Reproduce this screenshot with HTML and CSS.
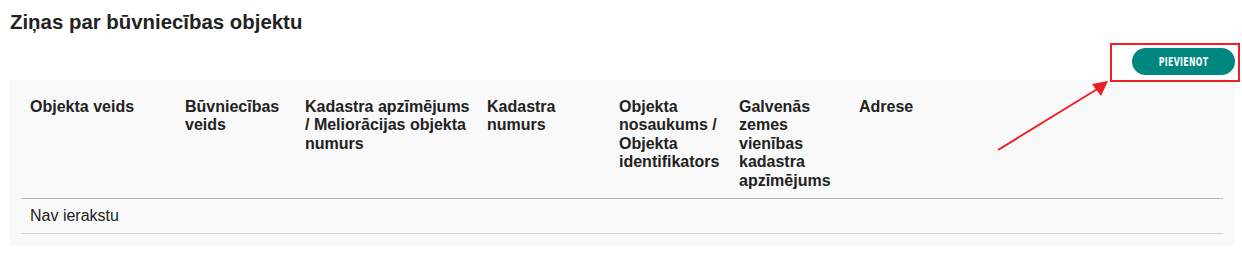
FILE: index.html
```html
<!DOCTYPE html>
<html lang="lv">

<head>
    <meta charset="UTF-8">
    <meta name="viewport" content="width=device-width, initial-scale=1.0">
    <title>Ziņas par būvniecības objektu</title>
    <link rel="stylesheet" href="styles.css">
</head>

<body>
    <div class="page">
        <h2 class="section-title">Ziņas par būvniecības objektu</h2>

        <div class="toolbar">
            <button class="btn-add" type="button"><span>Pievienot</span></button>
        </div>

        <div class="table-panel">
            <table class="objects-table">
                <thead>
                    <tr>
                        <th class="col-type">Objekta veids</th>
                        <th class="col-build">Būvniecības veids</th>
                        <th class="col-cadastre">Kadastra apzīmējums / Meliorācijas objekta numurs</th>
                        <th class="col-number">Kadastra numurs</th>
                        <th class="col-name">Objekta nosaukums / Objekta identifikators</th>
                        <th class="col-main">Galvenās zemes vienības kadastra apzīmējums</th>
                        <th>Adrese</th>
                    </tr>
                </thead>
                <tbody>
                    <tr>
                        <td colspan="7">Nav ierakstu</td>
                    </tr>
                </tbody>
            </table>
        </div>

        <!-- annotation: highlight + arrow pointing at the button -->
        <div class="highlight-box"></div>
        <svg class="highlight-arrow" width="1242" height="257" viewBox="0 0 1242 257">
            <line x1="998" y1="150" x2="1099" y2="88" stroke="#ec2027" stroke-width="2" />
            <polygon points="1108,81 1092,84 1101,96" fill="#ec2027" />
        </svg>
    </div>
</body>

</html>
```

FILE: styles.css
```css
:root {
    --text-color: #222222;
    --panel-background: #f9f9f9;
    --accent-color: #00877f;
    --marker-color: #ec2027;
    --head-border: #b5b5b5;
    --row-border: #d6d6d6;
}

body {
    margin: 0;
    font-family: "Liberation Sans", Arial, sans-serif;
    color: var(--text-color);
    background: #ffffff;
}

.page {
    position: relative;
    width: 1242px;
    height: 257px;
    padding: 0 7px 0 10px;
    box-sizing: border-box;
}

.section-title {
    margin: 0;
    padding-top: 11px;
    font-size: 20.4px;
    line-height: 23px;
    font-weight: bold;
}

.toolbar {
    display: flex;
    justify-content: flex-end;
    margin: 14px 0 5px;
}

.btn-add {
    width: 103px;
    height: 27px;
    border: none;
    border-radius: 14px;
    background: var(--accent-color);
    color: #ffffff;
    padding: 0;
    display: flex;
    align-items: center;
    justify-content: center;
}

.btn-add span {
    display: inline-block;
    font-family: "DejaVu Sans Condensed", "DejaVu Sans", sans-serif;
    font-weight: bold;
    font-size: 12px;
    text-transform: uppercase;
    letter-spacing: 0.5px;
    transform: scaleX(0.72);
}

.table-panel {
    background: var(--panel-background);
    padding: 10px 12px 12px 11px;
}

.objects-table {
    width: 100%;
    border-collapse: collapse;
    font-size: 16px;
}

.objects-table th,
.objects-table td {
    padding: 8px 9px;
    text-align: left;
    vertical-align: top;
    line-height: 18.4px;
}

.objects-table th {
    font-weight: bold;
    border-bottom: 1px solid var(--head-border);
}

.objects-table td {
    border-bottom: 1px solid var(--row-border);
}

.objects-table .col-type { width: 137px; }
.objects-table .col-build { width: 102px; }
.objects-table .col-cadastre { width: 171px; padding-right: 2px; }
.objects-table .col-number { width: 114px; }
.objects-table .col-name { width: 102px; }
.objects-table .col-main { width: 102px; }

.highlight-box {
    position: absolute;
    left: 1110px;
    top: 43px;
    width: 130px;
    height: 39px;
    border: 2px solid var(--marker-color);
    box-sizing: border-box;
}

.highlight-arrow {
    position: absolute;
    left: 0;
    top: 0;
    pointer-events: none;
}
```
